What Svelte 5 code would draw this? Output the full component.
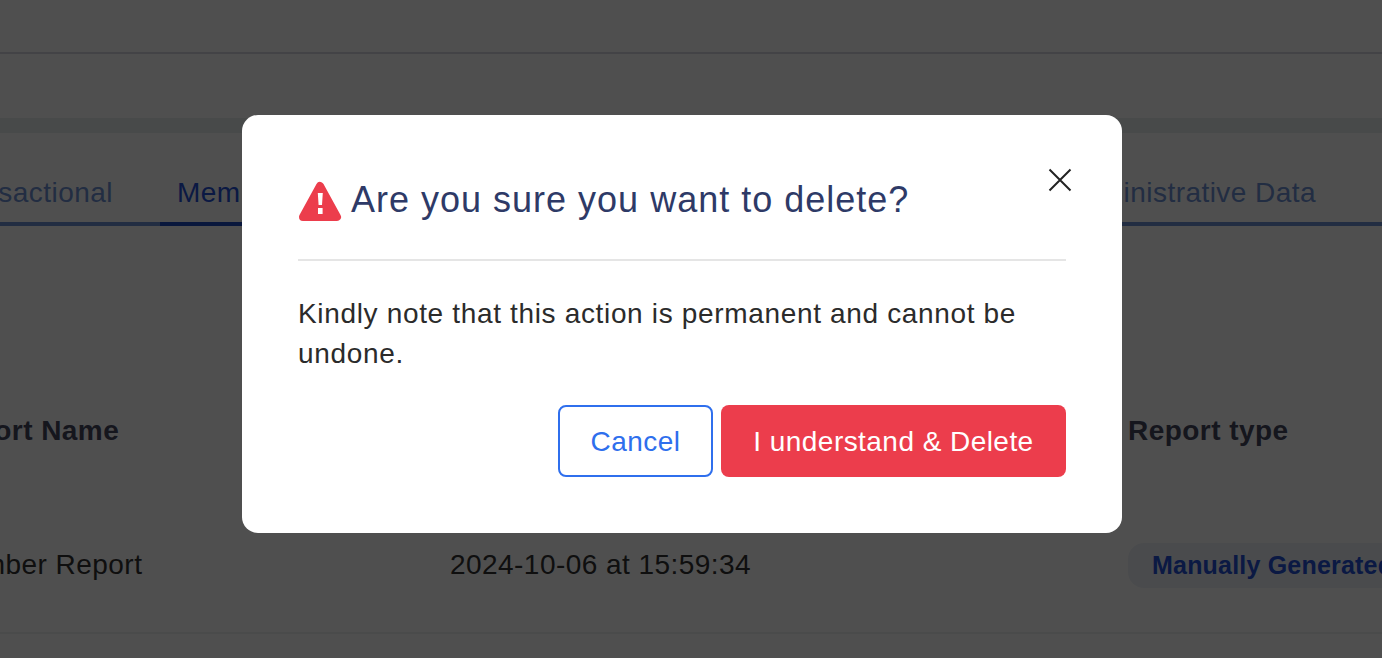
<script>
  const tabs = [
    { label: 'Transactional', active: false },
    { label: 'Member Reports', active: true },
    { label: 'Administrative Data', active: false }
  ];
</script>

<div class="page">
  <header class="topbar"></header>
  <div class="subbar"></div>
  <div class="band"></div>

  <nav class="tabs">
    {#each tabs as tab}
      <div class="tab" class:active={tab.active}>{tab.label}</div>
    {/each}
  </nav>

  <div class="table">
    <div class="row head">
      <div class="c1">Report Name</div>
      <div class="c2">Generated At</div>
      <div class="c3">Report type</div>
    </div>
    <div class="row body">
      <div class="c1">Member Report</div>
      <div class="c2">2024-10-06 at 15:59:34</div>
      <div class="c3"><span class="badge">Manually Generated</span></div>
    </div>
  </div>
</div>

<div class="overlay">
  <div class="modal">
    <button class="close" aria-label="Close">
      <svg width="24" height="24" viewBox="0 0 24 24" fill="none" stroke="#222" stroke-width="2">
        <path d="M1.5 1.5 L22.5 22.5 M22.5 1.5 L1.5 22.5" />
      </svg>
    </button>
    <h2 class="title">
      <svg class="warn" width="44" height="42" viewBox="0 0 44 42">
        <path d="M22 7 L39 38 H5 Z" fill="#ec3d4c" stroke="#ec3d4c" stroke-width="8" stroke-linejoin="round" />
        <path d="M19.8 14 H24.8 L24 26 H20.6 Z M20 29 H24.6 V35 H20 Z" fill="#fff" />
      </svg>
      <span>Are you sure you want to delete?</span>
    </h2>
    <p class="text">Kindly note that this action is permanent and cannot be undone.</p>
    <div class="actions">
      <button class="btn cancel">Cancel</button>
      <button class="btn delete">I understand &amp; Delete</button>
    </div>
  </div>
</div>

<style>
  :global(body) {
    margin: 0;
    overflow: hidden;
    font-family: "Liberation Sans", Arial, sans-serif;
  }
  .page {
    height: 658px;
    overflow: hidden;
    background: #fff;
    letter-spacing: 0.45px;
  }
  .topbar {
    height: 52px;
    border-bottom: 2px solid #d8d8e0;
  }
  .subbar {
    height: 64px;
  }
  .band {
    height: 15px;
    background: #e8eeee;
  }
  .tabs {
    display: flex;
    margin-left: -60px;
    margin-top: 38px;
  }
  .tab {
    font-size: 28px;
    line-height: 44px;
    height: 51px;
    color: #6f92d6;
    border-bottom: 4px solid #6f92d6;
    white-space: nowrap;
    flex: none;
  }
  .tab:first-child {
    padding-right: 47px;
  }
  .tab.active {
    color: #2450d8;
    border-bottom-color: #1f4bc0;
    width: 400px;
    padding-left: 17px;
  }
  .tab:last-child {
    flex: 1;
    text-align: right;
    padding-right: 66px;
  }
  .table {
    margin-top: 184px;
  }
  .row {
    display: flex;
    white-space: nowrap;
  }
  .c1 { width: 508px; margin-left: -58px; flex: none; }
  .c2 { width: 678px; flex: none; }
  .head {
    font-size: 28px;
    font-weight: 700;
    color: #45475f;
    line-height: 42px;
  }
  .head .c1 {
    width: 510px;
    margin-left: -60px;
  }
  .body {
    margin-top: 92px;
    font-size: 28px;
    line-height: 42px;
    color: #333;
    height: 88px;
    border-bottom: 2px solid #eef1f3;
  }
  .badge {
    display: inline-block;
    margin-top: -1px;
    font-size: 25px;
    font-weight: 700;
    letter-spacing: 0.2px;
    color: #2450d8;
    background: #eef3f8;
    padding: 0 24px;
    border-radius: 16px;
    line-height: 45px;
  }
  .overlay {
    position: fixed;
    inset: 0;
    background: rgba(0, 0, 0, 0.69);
    padding: 115px 0 0 242px;
  }
  .modal {
    position: relative;
    box-sizing: border-box;
    width: 880px;
    height: 418px;
    background: #fff;
    border-radius: 16px;
    padding: 64px 56px 56px;
  }
  .close {
    position: absolute;
    top: 53px;
    right: 50px;
    padding: 0;
    border: 0;
    background: none;
    display: flex;
  }
  .title {
    display: flex;
    align-items: center;
    gap: 9px;
    margin: 0;
    padding-bottom: 38px;
    border-bottom: 2px solid #e5e5e5;
    font-size: 36px;
    font-weight: 400;
    line-height: 42px;
    letter-spacing: 1px;
    color: #2e3a67;
  }
  .warn { flex: none; }
  .text {
    margin: 33px 0 0;
    font-size: 28px;
    line-height: 40px;
    letter-spacing: 0.66px;
    color: #2b2b2b;
  }
  .actions {
    display: flex;
    justify-content: flex-end;
    gap: 8px;
    margin-top: 31px;
  }
  .btn {
    height: 72px;
    padding: 2px 0 0;
    font-family: inherit;
    font-size: 28px;
    letter-spacing: 0.45px;
    border-radius: 8px;
    box-sizing: border-box;
  }
  .cancel {
    width: 155px;
    background: #fff;
    color: #2f6fed;
    border: 2px solid #2f6fed;
  }
  .delete {
    width: 345px;
    background: #ec3d4c;
    color: #fff;
    border: 0;
  }
</style>
